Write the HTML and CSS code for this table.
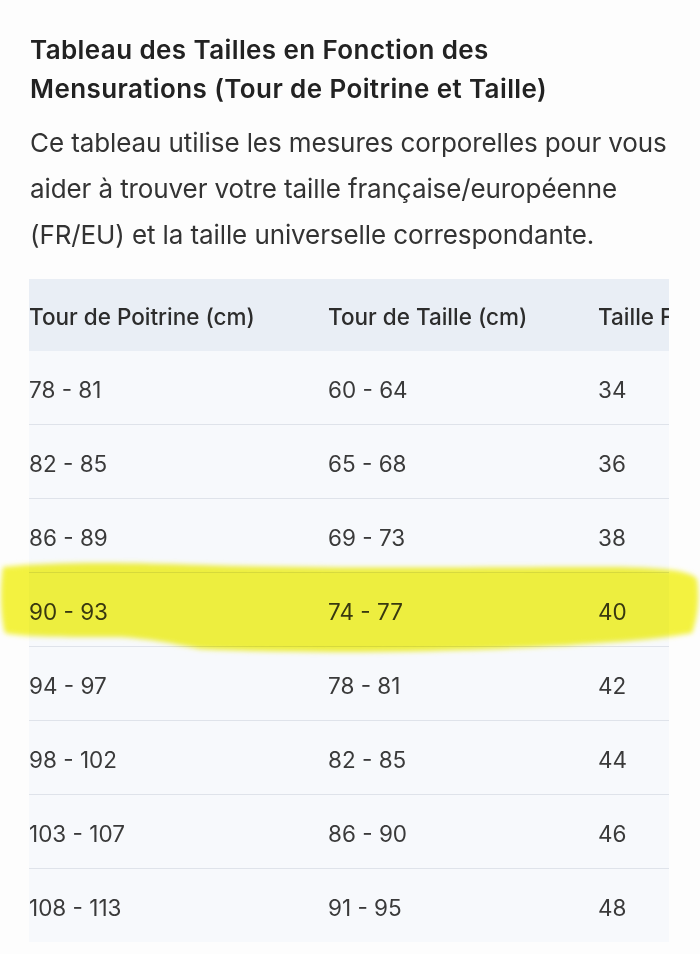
FILE: index.html
```html
<!DOCTYPE html>
<html lang="fr">
<head>
<meta charset="utf-8">
<title>Tableau des Tailles</title>
<link rel="stylesheet" href="styles.css">
</head>
<body>
<main class="page">
  <h2 class="title">Tableau des Tailles en Fonction des Mensurations (Tour de Poitrine et Taille)</h2>
  <p class="intro">Ce tableau utilise les mesures corporelles pour vous aider à trouver votre taille française/européenne (FR/EU) et la taille universelle correspondante.</p>
  <div class="table-wrap">
    <table class="sizes">
      <thead>
        <tr><th class="c1">Tour de Poitrine (cm)</th><th class="c2">Tour de Taille (cm)</th><th class="c3">Taille FR/EU</th></tr>
      </thead>
      <tbody>
        <tr><td class="c1">78 - 81</td><td class="c2">60 - 64</td><td class="c3">34</td></tr>
        <tr><td class="c1">82 - 85</td><td class="c2">65 - 68</td><td class="c3">36</td></tr>
        <tr><td class="c1">86 - 89</td><td class="c2">69 - 73</td><td class="c3">38</td></tr>
        <tr><td class="c1">90 - 93</td><td class="c2">74 - 77</td><td class="c3">40</td></tr>
        <tr><td class="c1">94 - 97</td><td class="c2">78 - 81</td><td class="c3">42</td></tr>
        <tr><td class="c1">98 - 102</td><td class="c2">82 - 85</td><td class="c3">44</td></tr>
        <tr><td class="c1">103 - 107</td><td class="c2">86 - 90</td><td class="c3">46</td></tr>
        <tr><td class="c1">108 - 113</td><td class="c2">91 - 95</td><td class="c3">48</td></tr>
      </tbody>
    </table>
  </div>
  <svg class="highlight" width="700" height="110" viewBox="0 0 700 110" aria-hidden="true">
    <defs>
      <filter id="soft" x="-5%" y="-20%" width="110%" height="140%">
        <feGaussianBlur stdDeviation="2.5"/>
      </filter>
    </defs>
    <path filter="url(#soft)" fill="#f5f440" d="M3 12 C 60 6, 140 8, 200 10 C 320 14, 480 12, 600 12 C 650 12, 690 14, 697 24 C 700 42, 698 62, 692 78 C 660 84, 630 86, 600 88 C 500 96, 320 100, 200 94 C 170 88, 150 84, 120 82 C 70 82, 20 82, 5 78 C 0 60, 0 30, 3 12 Z"/>
  </svg>
</main>
</body>
</html>
```

FILE: styles.css
```css
html, body {
  margin: 0;
  padding: 0;
  background: #fdfdfd;
}

.page {
  position: relative;
  width: 700px;
  height: 954px;
  overflow: hidden;
  padding: 30px 0 0 30px;
  box-sizing: border-box;
  font-family: Inter, "Liberation Sans", sans-serif;
}

.title {
  margin: 0;
  width: 600px;
  font-size: 26px;
  font-weight: 600;
  line-height: 39px;
  color: #222;
  letter-spacing: 0.4px;
}

.intro {
  margin: 12px 0 0;
  width: 660px;
  font-size: 26px;
  font-weight: 400;
  line-height: 46px;
  color: #333;
  letter-spacing: -0.1px;
}

.table-wrap {
  margin-top: 21px;
  margin-left: -1px;
  width: 640px;
  overflow: hidden;
}

.sizes {
  border-collapse: collapse;
  table-layout: fixed;
  width: 800px;
  font-size: 22.5px;
  color: #3a3a3a;
}

.sizes th, .sizes td {
  text-align: left;
  padding: 0;
  white-space: nowrap;
  font-weight: 400;
}

.sizes th {
  height: 69px;
  padding-top: 3px;
  background: #e9eef5;
  color: #2c2c2c;
  font-weight: 500;
}

.sizes td {
  height: 69px;
  padding-top: 4px;
  background: #f7f9fc;
  border-bottom: 1px solid #dfe3ea;
}

.sizes tbody tr:last-child td {
  border-bottom: none;
}

.c1 { width: 299px; }
.c2 { width: 270px; }
.c3 { width: 231px; }

.highlight {
  position: absolute;
  left: 0;
  top: 555px;
  mix-blend-mode: multiply;
  pointer-events: none;
}
```
